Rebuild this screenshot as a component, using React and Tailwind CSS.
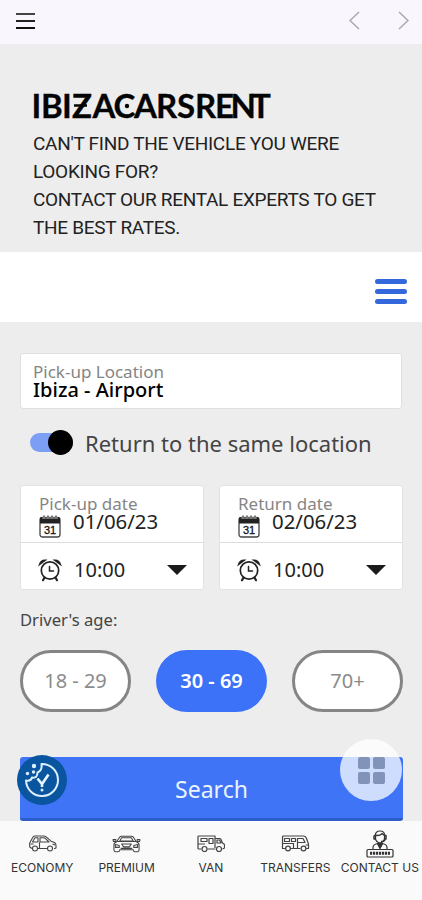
import React, { useState } from 'react';

const Logo = () => (
  <svg width="240" height="43" viewBox="0 0 240 43" className="block overflow-visible">
    <text
      x="-1.500 8 29 39 59.500 80.500 101 123 144 162 182 197.500 218"
      y="32"
      fontFamily="Lato, sans-serif"
      fontSize="33"
      fontWeight="700"
      fill="#050505"
      stroke="#050505"
      strokeWidth=".3"
    >
      IBIZACARSRENT
    </text>
    <path d="M41 19.500h13" stroke="#050505" strokeWidth="2.500" />
    <circle cx="94" cy="20" r="2.200" fill="#050505" />
  </svg>
);

const CalendarIcon = () => (
  <svg width="22" height="24" viewBox="0 0 22 24" fill="none">
    <rect x="1" y="3.5" width="20" height="19.5" rx="2.5" fill="#fff" stroke="#444" strokeWidth="1.3" />
    <path d="M1 9.5V5q0-2 2-2h16q2 0 2 2v4.5z" fill="#222" />
    <path d="M5 1v4M9 1v4M13 1v4M17 1v4" stroke="#fff" strokeWidth="2.6" />
    <path d="M5 1.5v4M9 1.5v4M13 1.5v4M17 1.5v4" stroke="#222" strokeWidth="1.2" />
    <text x="11" y="19.5" textAnchor="middle" fontFamily="Liberation Sans, sans-serif" fontSize="11" fill="#111" stroke="#111" strokeWidth=".3">31</text>
  </svg>
);

const AlarmIcon = () => (
  <svg width="24" height="24" viewBox="0 0 24 24" fill="none" stroke="#222" strokeWidth="1.7" strokeLinecap="round">
    <circle cx="12" cy="12.5" r="8.7" />
    <path d="M11.500 8.500V13h4" strokeWidth="1.500" />
    <path d="M1.8 6.2Q3 2.6 6.8 2.4L1.8 6.2zM22.2 6.2Q21 2.6 17.2 2.4l5 3.8z" fill="#222" />
    <path d="M6.3 20l-1.300 2.200M17.700 20l1.300 2.200" strokeWidth="2.200" />
  </svg>
);

const CookieIcon = () => (
  <svg width="50" height="50" viewBox="0 0 50 50" fill="none">
    <circle cx="25" cy="25" r="25" fill="#0955a0" />
    <path d="M24.500 9A16 16 0 1 1 9 25.500Q14 26.500 15 22.500Q20.500 23.500 20.500 17.500Q25.500 15.500 24.500 9z" stroke="#dcefff" strokeWidth="2" strokeLinejoin="round" />
    <path d="M20.500 23.500l4.500 5.500l6.500-9.500M25 29v3" stroke="#e8f5ff" strokeWidth="2.600" />
    <g fill="#dcefff">
      <circle cx="17" cy="11" r="2.200" />
      <circle cx="10.500" cy="18.500" r="1.700" />
      <circle cx="16.500" cy="17" r="1.700" />
      <circle cx="25" cy="35" r="1.500" />
    </g>
  </svg>
);

const EconomyIcon = () => (
  <svg width="29" height="17" viewBox="0 0 28 17" fill="none" stroke="#444" strokeWidth="1.100" strokeLinejoin="round">
    <path d="M3.500 13.500L1.200 12V8L4.500 2q.5-1 2-1h8.500q1.500 0 3 1.200l4.500 4l3.500 1.300q1.500.8 1.500 3v2.500l-2 .8M9.500 13.500h9" />
    <path d="M4 7l2.500-4.300h3V7zM11.500 7V2.700h3.500q1 0 2 1L20.500 7zM11 7.500v5.500M2 9h3M24 9l2.500 1" />
    <circle cx="6.500" cy="13.500" r="2.500" />
    <circle cx="21.500" cy="13.500" r="2.500" />
  </svg>
);

const PremiumIcon = () => (
  <svg width="29" height="18" viewBox="0 0 30 18" fill="none" stroke="#444" strokeWidth="1.100" strokeLinejoin="round">
    <path d="M5 6.500L8 1.800Q8.500 1 10 1h10q1.500 0 2 .8l3 4.700M8 6L10 2.500h10L22 6z" />
    <path d="M5.500 6.500h19q3.500 1 3.500 3.500v5q0 2-1.500 2h-3q-1.500 0-1.500-2H8q0 2-1.500 2h-3Q2 17 2 15v-5q0-2.500 3.500-3.500z" />
    <path d="M1 4.500h3v2H1.500zM29 4.500h-3v2h2.500zM3.500 9.500l4 1v2h-4zM26.500 9.500l-4 1v2h4zM10 9h10l-2 3h-6zM9 13.500h12" />
  </svg>
);

const VanIcon = () => (
  <svg width="28" height="18" viewBox="0 0 28 18" fill="none" stroke="#444" strokeWidth="1.200" strokeLinejoin="round">
    <path d="M4.500 14H2q-1 0-1-1V2q0-1 1-1h16v12M10.500 14h8" />
    <path d="M18 3.500h4.500q1 0 1.500 1l1.500 3.500l1.500 1q.5.500.5 1.500V13l-2 1M20 5h2.500l1.500 3h-4zM4 3.500h6v3H4zM12 3.500h4v5h-4zM1 9h7" />
    <circle cx="7.500" cy="14" r="2.500" />
    <circle cx="22" cy="14" r="2.500" />
  </svg>
);

const TransfersIcon = () => (
  <svg width="29" height="17" viewBox="0 0 28 17" fill="none" stroke="#444" strokeWidth="1.200" strokeLinejoin="round">
    <path d="M4 13.500H1V2q0-1 1-1h20q2 0 2.800 2L27 9v4.500h-2.500M9.500 13.500H19" />
    <path d="M3 3.500h5v3H3zM10 3.500h4v3h-4zM16 3.500h5.500l2 4H16zM1 8.500h11M12 8v5M16 8v5M24 10h3" />
    <circle cx="6.500" cy="13.500" r="2.400" />
    <circle cx="22" cy="13.500" r="2.400" />
  </svg>
);

const SupportIcon = () => (
  <svg width="28" height="28" viewBox="0 0 28 28" fill="none" stroke="#333" strokeWidth="1.200" strokeLinejoin="round">
    <path d="M9.500 8V5q0-4 4.500-4t4.500 4v3q0 4-4.500 5Q9.500 12 9.500 8z" />
    <path d="M8 5.500h3q4 0 5-2l2.500 2H20v3.500h-2M8 5.500V9h2M19 9q0 2.500-4 2.500" strokeWidth="1.500" />
    <path d="M7 19v-1.500q0-3 4.500-4l2.500 4l2.500-4q4.500 1 4.500 4V19" />
    <path d="M11.500 13.500h5l-2.500 5z" fill="#333" />
    <rect x="1" y="19.500" width="26" height="7.500" rx="1" />
    <path d="M4 23.300h20" strokeWidth="3" strokeDasharray="2.200 .8" />
  </svg>
);

const navItems = [
  { label: 'ECONOMY', Icon: EconomyIcon },
  { label: 'PREMIUM', Icon: PremiumIcon },
  { label: 'VAN', Icon: VanIcon },
  { label: 'TRANSFERS', Icon: TransfersIcon },
  { label: 'CONTACT US', Icon: SupportIcon },
];

const ages = ['18 - 29', '30 - 69', '70+'];

const TopBar = () => (
  <header className="flex h-11 items-center justify-between bg-[#f9f6fd] pl-4 pr-[13px]">
    <button className="flex w-[19px] flex-col gap-[5px] pb-[3px]">
      <span className="h-0.5 bg-[#444]"></span>
      <span className="h-0.5 bg-[#222]"></span>
      <span className="h-0.5 bg-[#111]"></span>
    </button>
    <div className="flex gap-[38px] pb-[3px]">
      <svg width="11" height="19" viewBox="0 0 11 19" fill="none" stroke="#aaa8ad" strokeWidth="1.500"><path d="M10 1L1 9.500L10 18" /></svg>
      <svg width="11" height="19" viewBox="0 0 11 19" fill="none" stroke="#aaa8ad" strokeWidth="1.500"><path d="M1 1l9 8.500L1 18" /></svg>
    </div>
  </header>
);

const DateCard = ({ label, date, time }) => (
  <div className="h-[105px] w-[184px] rounded-[3px] border border-[#e2e2e2] bg-white">
    <div className="h-[57px] border-b border-[#dcdcdc] pl-[18px] pt-2.5">
      <div className="text-[17px] leading-4 text-[#858585]">{label}</div>
      <div className="-mt-px flex">
        <div className="pt-[3px]"><CalendarIcon /></div>
        <span className="ml-3 text-[20.4px] leading-5 text-[#222]">{date}</span>
      </div>
    </div>
    <div className="flex h-[46px] items-center pl-[17px] pr-4 pt-2">
      <AlarmIcon />
      <span className="ml-3 text-[20px] leading-6 text-[#222]">{time}</span>
      <span className="ml-auto border-x-[10px] border-t-[10px] border-x-transparent border-t-[#1b1b1b]"></span>
    </div>
  </div>
);

const App = () => {
  const [age, setAge] = useState('30 - 69');

  return (
    <div className="relative flex h-[900px] w-[422px] flex-col overflow-hidden bg-[#ededed] font-['Noto_Sans',sans-serif]">
      <TopBar />

      <section className="h-52 pl-[33px] pt-[42px]">
        <h1 className="h-11"><Logo /></h1>
        <p className="w-[360px] font-['Roboto',sans-serif] text-[19px] leading-[28px] tracking-[-0.29px] text-[#222]">
          CAN'T FIND THE VEHICLE YOU WERE<br />
          LOOKING FOR?<br />
          CONTACT OUR RENTAL EXPERTS TO GET<br />
          THE BEST RATES.
        </p>
      </section>

      <div className="flex h-[70px] items-center justify-end bg-white pr-[15px] pt-[9px]">
        <button className="flex w-8 flex-col gap-[5px]">
          <span className="h-[5px] rounded-full bg-[#3466dc]"></span>
          <span className="h-[5px] rounded-full bg-[#3466dc]"></span>
          <span className="h-[5px] rounded-full bg-[#3466dc]"></span>
        </button>
      </div>

      <main className="flex flex-col px-5 pt-[31px]">
        <div className="h-[56px] w-[382px] rounded-[3px] border border-[#e0e0e0] bg-white pl-3 pt-2.5">
          <div className="text-[17px] leading-4 text-[#858585]">Pick-up Location</div>
          <div className="text-[20px] font-medium leading-5 text-black">Ibiza - Airport</div>
        </div>

        <div className="mt-[17px] flex h-8 items-center pl-2.5">
          <div className="flex h-[19px] w-[43px] items-center justify-end rounded-full bg-[#7c9ff5]">
            <span className="h-[25px] w-[25px] shrink-0 rounded-full bg-black"></span>
          </div>
          <span className="ml-3 whitespace-nowrap pt-0.5 text-[22px] leading-8 text-[#444]">Return to the same location</span>
        </div>

        <div className="mt-[27px] -mr-px flex justify-between">
          <DateCard label="Pick-up date" date="01/06/23" time="10:00" />
          <DateCard label="Return date" date="02/06/23" time="10:00" />
        </div>

        <div className="mt-[18px] text-[16.6px] leading-6 text-[#444]">Driver's age:</div>

        <div className="mt-[18px] -mr-px flex justify-between">
          {ages.map((item) => (
            <button
              key={item}
              onClick={() => setAge(item)}
              className={item === age
                ? 'h-[62px] w-[111px] rounded-full bg-[#3b72f8] text-[20px] font-semibold text-white'
                : 'h-[62px] w-[111px] rounded-full border-[3px] border-[#858585] bg-white text-[20px] text-[#8b8b8b]'}
            >
              {item}
            </button>
          ))}
        </div>

        <button className="mt-[45px] h-16 w-[383px] rounded-[3px] border-b-[3px] border-[#2c5dc9] bg-[#3f74f6] pt-1 text-[23px] text-[#eaf3ff]">
          Search
        </button>
      </main>

      <div className="absolute left-[17px] top-[755px]"><CookieIcon /></div>
      <div className="absolute left-[340px] top-[739px] flex h-[62px] w-[62px] items-center justify-center rounded-full bg-white/75">
        <div className="grid grid-cols-2 gap-[3px]">
          <span className="h-3 w-3 rounded-[2px] bg-[#8193b8]"></span>
          <span className="h-3 w-3 rounded-[2px] bg-[#8193b8]"></span>
          <span className="h-3 w-3 rounded-[2px] bg-[#8193b8]"></span>
          <span className="h-3 w-3 rounded-[2px] bg-[#8193b8]"></span>
        </div>
      </div>

      <nav className="mt-auto grid h-[79px] grid-cols-5 bg-[#fafafa]">
        {navItems.map(({ label, Icon }) => (
          <button key={label} className="flex flex-col items-center pt-2">
            <span className="flex h-[29px] items-center"><Icon /></span>
            <span className="mt-0.5 whitespace-nowrap font-['Inter',sans-serif] text-[12px] leading-4 text-[#333]">{label}</span>
          </button>
        ))}
      </nav>
    </div>
  );
};

export default App;
